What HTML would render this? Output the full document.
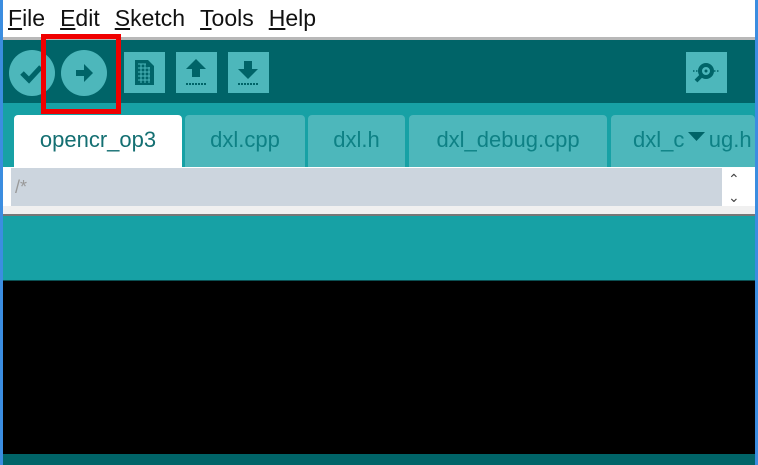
<!DOCTYPE html>
<html><head><style>
body{margin:0;width:758px;height:465px;overflow:hidden;background:#fff;font-family:"Liberation Sans",sans-serif;position:relative}
.a{position:absolute}
.menu span{margin-right:15px}
.menu u{text-decoration:underline}
.tab{position:absolute;top:115px;height:52px;background:#4db7bb;border-radius:4px 4px 0 0;color:#0e8185;font-size:22px;line-height:50px;text-align:center;overflow:hidden;white-space:nowrap}
.sq{position:absolute;top:52px;width:41px;height:41px;background:#4db7bb}
</style></head><body>
<div class="a" style="left:0;top:0;width:3px;height:465px;background:#3b8de0"></div>
<div class="a" style="left:755px;top:0;width:3px;height:465px;background:#3b8de0"></div>
<div class="a menu" style="left:8px;top:5px;font-size:23px;color:#111;white-space:nowrap"><span><u>F</u>ile</span><span><u>E</u>dit</span><span><u>S</u>ketch</span><span><u>T</u>ools</span><span><u>H</u>elp</span></div>
<div class="a" style="left:3px;top:37px;width:752px;height:3px;background:#b8b8b8"></div>
<div class="a" style="left:3px;top:40px;width:752px;height:63px;background:#006468"></div>
<div class="a" style="left:3px;top:103px;width:752px;height:64px;background:#17a1a5"></div>
<svg class="a" style="left:0;top:40px" width="758" height="63">
<circle cx="32" cy="33" r="23" fill="#4db7bb"/>
<path d="M22 33 l7 7 l12 -13" stroke="#006468" stroke-width="5" fill="none"/>
<circle cx="84" cy="33" r="23" fill="#4db7bb"/>
<path d="M76 30h8v-6l9 9l-9 9v-6h-8z" fill="#006468"/>
</svg>
<div class="sq" style="left:124px"><svg width="41" height="41"><path d="M11 8h13l6 6v19h-19z" fill="#006468"/><path d="M14 12h8M14 16h12M14 20h12M14 24h12M14 28h12M17 12v19M21 12v19M25 15v16" stroke="#4db7bb" stroke-width="1"/></svg></div>
<div class="sq" style="left:176px"><svg width="41" height="41"><path d="M20 7l10 10h-6v8h-8v-8h-6z" fill="#006468"/><path d="M10 32h21" stroke="#006468" stroke-width="2" stroke-dasharray="2 1"/></svg></div>
<div class="sq" style="left:228px"><svg width="41" height="41"><path d="M20 27l10 -10h-6v-8h-8v8h-6z" fill="#006468"/><path d="M10 32h21" stroke="#006468" stroke-width="2" stroke-dasharray="2 1"/></svg></div>
<div class="sq" style="left:686px"><svg width="41" height="41"><circle cx="20" cy="19" r="6" stroke="#006468" stroke-width="4" fill="none"/><circle cx="20" cy="19" r="1.5" fill="#006468"/><path d="M15 24l-5 5" stroke="#006468" stroke-width="4"/><path d="M28 19h6M7 19h5" stroke="#006468" stroke-width="1.5" stroke-dasharray="1.5 1.5"/></svg></div>
<div class="a" style="left:41px;top:34px;width:70px;height:70px;border:5px solid #f00000"></div>
<div class="tab" style="left:14px;width:168px;background:#fff;color:#146f72">opencr_op3</div>
<div class="tab" style="left:185px;width:120px">dxl.cpp</div>
<div class="tab" style="left:308px;width:97px">dxl.h</div>
<div class="tab" style="left:409px;width:198px">dxl_debug.cpp</div>
<div class="tab" style="left:611px;width:144px;text-align:left;padding-left:22px;box-sizing:border-box">dxl_c&nbsp;&nbsp;&nbsp;&nbsp;ug.h</div>
<svg class="a" style="left:686px;top:130px" width="22" height="14"><path d="M2 2h17l-8.5 9z" fill="#006468"/></svg>
<div class="a" style="left:3px;top:167px;width:752px;height:47px;background:#fff"></div>
<div class="a" style="left:11px;top:168px;width:711px;height:38px;background:#ccd5de;color:#999;font-size:18px;line-height:38px;padding-left:4px;box-sizing:border-box">/*</div>
<div class="a" style="left:3px;top:206px;width:752px;height:8px;background:#f0f0f0"></div>
<div class="a" style="left:728px;top:170px;font-size:14px;color:#444;line-height:18px">⌃<br>⌄</div>
<div class="a" style="left:3px;top:214px;width:752px;height:2px;background:#777"></div>
<div class="a" style="left:3px;top:216px;width:752px;height:64px;background:#17a1a5"></div>
<div class="a" style="left:3px;top:280px;width:752px;height:174px;background:#000;border-top:1px solid #0a4f52;box-sizing:border-box"></div>
<div class="a" style="left:3px;top:454px;width:752px;height:11px;background:#006468"></div>
</body></html>
